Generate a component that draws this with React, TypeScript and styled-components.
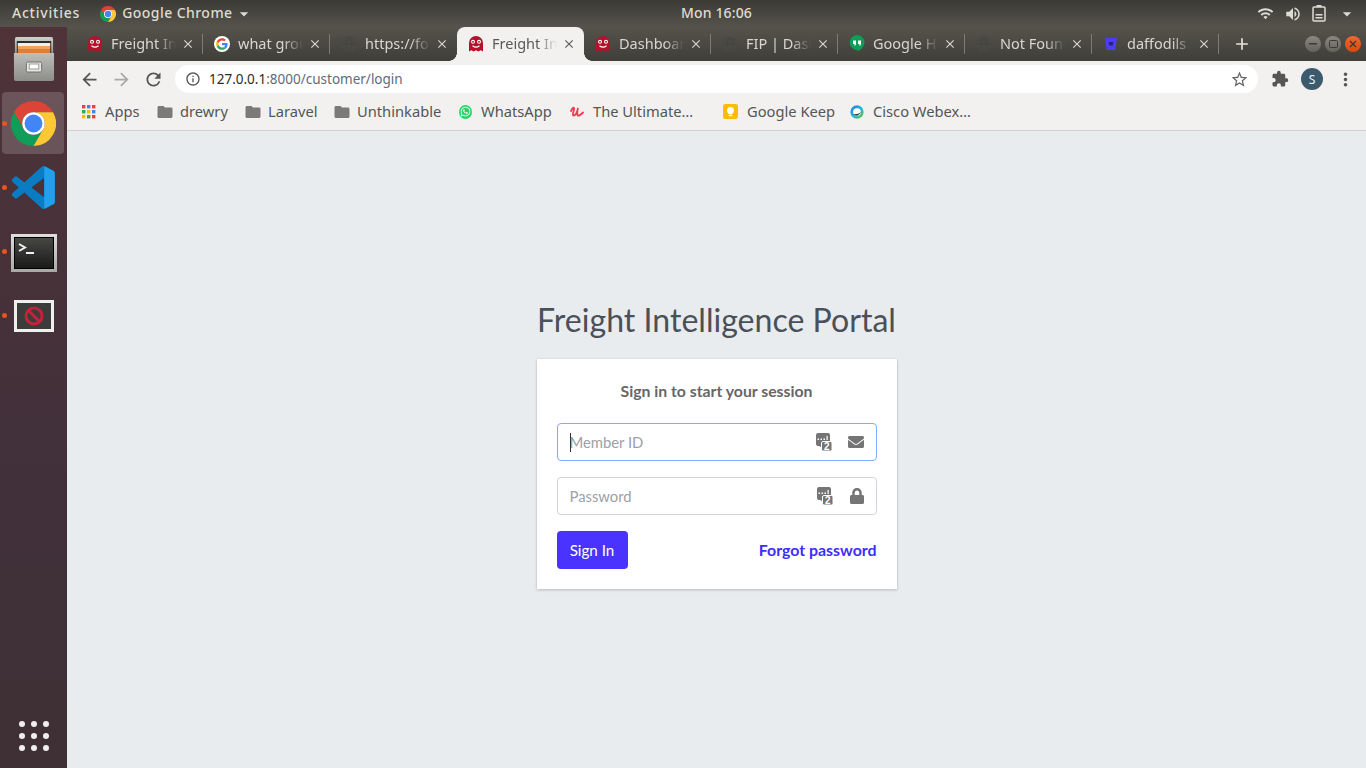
import React from "react";
import styled, { createGlobalStyle } from "styled-components";
import { FaEnvelope, FaLock, FaWhatsapp } from "react-icons/fa";
import {
  MdArrowBack, MdArrowForward, MdRefresh, MdInfoOutline, MdStarBorder, MdExtension, MdMoreVert,
  MdFolder, MdClose, MdAdd, MdWifi, MdVolumeUp, MdArrowDropDown,
} from "react-icons/md";

const PAGE_FONT = `"Lato", "Noto Sans", sans-serif`;
const UI_FONT = `"Noto Sans", "Open Sans", sans-serif`;

const Global = createGlobalStyle`
  html, body { margin: 0; padding: 0; height: 768px; overflow: hidden; background: #e9ecef; }
  #root { height: 768px; }
  * { box-sizing: border-box; }
`;

const Screen = styled.div`
  display: grid;
  grid-template-rows: 27px 1fr;
  grid-template-columns: 67px 1fr;
  width: 1366px;
  height: 768px;
  font-family: ${UI_FONT};
`;

const TopBar = styled.header`
  grid-column: 1 / 3;
  display: flex;
  align-items: center;
  padding: 0 9px 0 12px;
  background: linear-gradient(#3b3a36, #55534b);
  color: #dfdbd2;
  font-size: 14px;
  font-weight: 500;
  letter-spacing: 0.45px;
  line-height: 24px;
`;
const Activities = styled.span`
  letter-spacing: 0.78px;
  margin-bottom: 2px;
`;
const TopApp = styled.div`
  display: flex;
  align-items: center;
  gap: 6px;
  margin-left: 20px;
`;
const TopAppName = styled.span`
  margin-bottom: 2px;
`;
const TopCaret = styled(MdArrowDropDown)`
  margin-left: -5px;
`;
const Clock = styled.div`
  position: absolute;
  left: 681px;
  top: 1px;
  letter-spacing: 0.15px;
`;
const TopTray = styled.div`
  margin-left: auto;
  display: flex;
  align-items: center;
  gap: 10px;
  color: #dedbd3;
`;
const TrayCaret = styled(MdArrowDropDown)`
  margin-left: 1px;
`;

const Dock = styled.nav`
  display: flex;
  flex-direction: column;
  background: linear-gradient(#4f3339, #41303a 60%, #3f3035);
  padding-bottom: 17px;
`;
const DockItem = styled.div<{ $active?: boolean; $nudge?: number }>`
  position: relative;
  height: 64px;
  display: flex;
  align-items: center;
  justify-content: center;
  &::before {
    content: "";
    position: absolute;
    inset: 1px 3px 1px 2px;
    border-radius: 4px;
    background: ${(p) => (p.$active ? "rgba(255,255,255,0.17)" : "transparent")};
  }
  & > svg { position: relative; margin-top: ${(p) => p.$nudge ?? 0}px; }
`;
const RunDot = styled.span`
  position: absolute;
  left: 2px;
  top: 50%;
  width: 5px;
  height: 5px;
  margin-top: -2px;
  border-radius: 50%;
  background: #e95420;
`;
const AppGrid = styled.div`
  margin-top: auto;
  align-self: center;
  display: grid;
  grid-template-columns: repeat(3, 6px);
  gap: 6px;
`;
const AppDot = styled.span`
  width: 6px;
  height: 6px;
  border-radius: 50%;
  background: #f1efee;
`;

const Browser = styled.div`
  display: flex;
  flex-direction: column;
  min-width: 0;
`;
const TabStrip = styled.div`
  height: 34px;
  display: flex;
  align-items: stretch;
  padding-left: 9px;
  background: linear-gradient(#55534b, #3f3e39);
`;
const Tab = styled.div<{ $active?: boolean; $sep?: boolean }>`
  position: relative;
  width: 127px;
  flex: none;
  display: flex;
  align-items: center;
  gap: 8px;
  padding: 0 11px;
  color: ${(p) => (p.$active ? "#5a5a5a" : "#d8d6cf")};
  background: ${(p) => (p.$active ? "#f2f1f0" : "transparent")};
  border-radius: 8px 8px 0 0;
  font-size: 14.5px;
  &::after {
    content: "";
    position: absolute;
    right: 0;
    top: 7px;
    bottom: 7px;
    width: 1px;
    background: ${(p) => (p.$sep ? "#7d7b72" : "transparent")};
  }
`;
const Flare = styled.span<{ $side: "left" | "right" }>`
  position: absolute;
  bottom: 0;
  width: 8px;
  height: 8px;
  ${(p) => (p.$side === "left" ? "left: -8px;" : "right: -8px;")}
  background: radial-gradient(circle at ${(p) => (p.$side === "left" ? "0 0" : "100% 0")}, transparent 7.5px, #f2f1f0 8px);
`;
const TabTitle = styled.span`
  flex: 1;
  min-width: 0;
  padding-bottom: 2px;
  white-space: nowrap;
  overflow: hidden;
  -webkit-mask-image: linear-gradient(90deg, #000 70%, transparent);
  mask-image: linear-gradient(90deg, #000 70%, transparent);
`;
const TabClose = styled.span`
  display: flex;
  margin-right: -3px;
  margin-left: -3px;
  font-size: 14px;
`;
const NewTab = styled.div`
  width: 46px;
  display: flex;
  align-items: center;
  justify-content: center;
  color: #e6e3dc;
  font-size: 20px;
`;
const WinButtons = styled.div`
  margin-left: auto;
  padding-right: 5px;
  display: flex;
  align-items: center;
  gap: 4px;
`;
const WinButton = styled.span<{ $close?: boolean }>`
  width: 16px;
  height: 16px;
  border-radius: 50%;
  display: flex;
  align-items: center;
  justify-content: center;
  background: ${(p) => (p.$close ? "linear-gradient(#f0682f, #d9480f)" : "linear-gradient(#8a8880, #63625b)")};
  color: #3a3934;
`;

const Toolbar = styled.div`
  height: 35px;
  padding-top: 4px;
  display: flex;
  align-items: flex-start;
  background: #f2f1f0;
  color: #555;
`;
const ToolButton = styled.span<{ $dim?: boolean; $w?: number }>`
  width: ${(p) => p.$w ?? 32}px;
  height: 28px;
  flex: none;
  display: flex;
  align-items: center;
  justify-content: center;
  font-size: 21px;
  color: ${(p) => (p.$dim ? "#a9a9a9" : "#555")};
`;
const ToolLead = styled.span`
  width: 6px;
  flex: none;
`;
const Omnibox = styled.div`
  width: 1083px;
  height: 28px;
  margin-left: 6px;
  margin-right: 6px;
  flex: none;
  border-radius: 14px;
  background: #fff;
  display: flex;
  align-items: center;
  padding: 0 9px 0 10px;
  font-size: 13.5px;
  color: #5f6b7d;
`;
const InfoIcon = styled.span`
  display: flex;
  color: #555;
  font-size: 16px;
  margin-right: 8px;
`;
const UrlText = styled.span`
  padding-bottom: 1px;
`;
const Host = styled.span`
  color: #2c2c2c;
`;
const StarIcon = styled.span`
  display: flex;
  margin-left: auto;
  color: #666;
  font-size: 19px;
`;
const Avatar = styled.span`
  width: 22px;
  height: 22px;
  border-radius: 50%;
  background: #3d5a6c;
  color: #f2f2f2;
  font-size: 12px;
  display: flex;
  align-items: center;
  justify-content: center;
`;

const Bookmarks = styled.div`
  height: 35px;
  padding: 0 0 3px 15px;
  display: flex;
  align-items: center;
  background: #f2f1f0;
  border-bottom: 1px solid #cfd0d0;
  color: #555;
  font-size: 14.7px;
`;
const Bookmark = styled.div<{ $w: number }>`
  width: ${(p) => p.$w}px;
  flex: none;
  display: flex;
  align-items: center;
  gap: 9px;
  white-space: nowrap;
`;
const BookmarkLabel = styled.span`
  padding-bottom: 2px;
`;
const FolderIcon = styled(MdFolder)`
  color: #7a7a7a;
  font-size: 18px;
  margin: 0 -3px 0 -1px;
`;

const Page = styled.main`
  flex: 1;
  display: flex;
  flex-direction: column;
  align-items: center;
  justify-content: center;
  padding-bottom: 10px;
  background: #e9ecef;
  font-family: ${PAGE_FONT};
`;
const Title = styled.h1`
  margin: 0 0 20px;
  font-size: 32.1px;
  line-height: 39px;
  font-weight: 400;
  color: #495057;
  white-space: nowrap;
`;
const Card = styled.section`
  width: 360px;
  padding: 20px;
  background: #fff;
  box-shadow: 0 0 1px rgba(0, 0, 0, 0.125), 0 1px 3px rgba(0, 0, 0, 0.2);
  display: flex;
  flex-direction: column;
  gap: 16px;
`;
const CardHeading = styled.p`
  margin: 0 0 4px;
  text-align: center;
  font-size: 15.8px;
  line-height: 24px;
  font-weight: 700;
  color: #666;
`;
const Field = styled.div<{ $focused?: boolean }>`
  position: relative;
  height: 38px;
  display: flex;
  align-items: center;
  padding: 0 12px;
  border: 1px solid ${(p) => (p.$focused ? "#80a9ff" : "#ced4da")};
  border-radius: 4px;
  color: #757575;
`;
const FieldInput = styled.input`
  flex: 1;
  min-width: 0;
  border: 0;
  outline: 0;
  padding: 0;
  background: transparent;
  font: 400 14.8px ${PAGE_FONT};
  caret-color: transparent;
  &::placeholder { color: #9aa1a8; opacity: 1; }
`;
const Caret = styled.span`
  position: absolute;
  left: 12px;
  top: 9px;
  width: 1px;
  height: 19px;
  background: #333;
`;
const FieldIcons = styled.div<{ $gap: number }>`
  display: flex;
  align-items: center;
  gap: ${(p) => p.$gap}px;
`;
const LockGlyph = styled(FaLock)`
  margin-right: -1px;
`;
const Actions = styled.div`
  display: flex;
  align-items: center;
  justify-content: space-between;
`;
const SignIn = styled.button`
  width: 71px;
  height: 38px;
  border: 0;
  border-radius: 4px;
  background: #4b33ff;
  color: #fff;
  font: 400 15.2px ${PAGE_FONT};
  padding: 0;
`;
const Forgot = styled.a`
  color: #3d2dff;
  font-size: 15.9px;
  font-weight: 700;
  padding-bottom: 2px;
`;

const KeyIcon = () => (
  <svg width="16" height="18" viewBox="0 0 16 18">
    <rect x="0" y="0" width="14" height="13" rx="2" fill="#757575" />
    <path d="M1 12h6v3z" fill="#757575" />
    <rect x="1.5" y="5.5" width="1.5" height="1.500" fill="#fff" />
    <rect x="4.5" y="5.5" width="1.5" height="1.500" fill="#fff" />
    <rect x="7.5" y="5.5" width="1.5" height="1.500" fill="#fff" />
    <rect x="10.5" y="3" width="1.2" height="4" fill="#fff" />
    <rect x="5.5" y="8.5" width="10.500" height="9.500" rx="1.500" fill="#757575" stroke="#fff" strokeWidth="1" />
    <text x="10.800" y="17" fontSize="10" fontWeight="700" fontFamily="Liberation Sans, sans-serif" fill="#fff" textAnchor="middle">2</text>
  </svg>
);

const ChromeLogo = ({ size }: { size: number }) => (
  <svg width={size} height={size} viewBox="0 0 48 48">
    <path d="M44.8 12H24a12 12 0 0 0-10.4 18L3.200 12A24 24 0 0 1 44.800 12z" fill="#db4437" />
    <path d="M3.200 12l10.400 18a12 12 0 0 0 20.800 0L24 48A24 24 0 0 1 3.200 12z" fill="#0f9d58" />
    <path d="M24 48l10.400-18A12 12 0 0 0 24 12h20.800A24 24 0 0 1 24 48z" fill="#fcc934" />
    <circle cx="24" cy="24" r="12" fill="#fff" />
    <circle cx="24" cy="24" r="9.500" fill="#4285f4" />
  </svg>
);

const GhostIcon = () => (
  <svg width="16" height="16" viewBox="0 0 16 16">
    <path d="M1 7a7 7 0 0 1 14 0v8.500l-2.300-1.300-2.400 1.300L8 14.200l-2.300 1.300-2.400-1.300L1 15.500z" fill="#b3122b" />
    <circle cx="5" cy="5.800" r="2" fill="#fff" />
    <circle cx="11" cy="5.800" r="2" fill="#fff" />
    <circle cx="5" cy="5.800" r="0.900" fill="#7a0a1c" />
    <circle cx="11" cy="5.800" r="0.900" fill="#7a0a1c" />
    <path d="M4.500 9.700q3.500 2.800 7 0" fill="none" stroke="#fff" strokeWidth="1.100" />
  </svg>
);
const GoogleIcon = () => (
  <svg width="16" height="16" viewBox="0 0 48 48">
    <circle cx="24" cy="24" r="24" fill="#fff" />
    <g transform="translate(6.500 6.500) scale(0.73)">
      <path fill="#EA4335" d="M24 9.500c3.540 0 6.710 1.220 9.210 3.600l6.850-6.850C35.900 2.380 30.470 0 24 0 14.620 0 6.510 5.380 2.560 13.220l7.980 6.190C12.430 13.720 17.740 9.500 24 9.500z" />
      <path fill="#4285F4" d="M46.980 24.550c0-1.570-.15-3.090-.38-4.550H24v9.020h12.940c-.58 2.960-2.260 5.480-4.780 7.180l7.730 6c4.510-4.180 7.090-10.360 7.090-17.650z" />
      <path fill="#FBBC05" d="M10.530 28.590c-.48-1.450-.76-2.990-.76-4.590s.27-3.140.76-4.590l-7.980-6.190C.92 16.460 0 20.120 0 24c0 3.880.92 7.540 2.560 10.780l7.970-6.190z" />
      <path fill="#34A853" d="M24 48c6.480 0 11.930-2.130 15.890-5.810l-7.730-6c-2.150 1.450-4.920 2.300-8.160 2.300-6.260 0-11.570-4.220-13.470-9.910l-7.980 6.190C6.510 42.620 14.620 48 24 48z" />
    </g>
  </svg>
);
const GlobeDim = () => (
  <svg width="16" height="16" viewBox="0 0 16 16">
    <circle cx="8" cy="8" r="7.500" fill="#4a4943" />
    <path d="M1 8h14M8 1c-4 4-4 10 0 14M8 1c4 4 4 10 0 14" fill="none" stroke="#45443f" strokeWidth="1" />
  </svg>
);
const HangoutsIcon = () => (
  <svg width="16" height="18" viewBox="0 0 16 18">
    <path d="M8 0a7.500 7.500 0 0 1 7.500 7.500c0 4-3.600 7.200-7 9V15A7.500 7.500 0 0 1 8 0z" fill="#0f9d58" />
    <path d="M4 5.500h3V9q0 1.400-1.600 1.800V9H4zM9 5.500h3V9q0 1.400-1.600 1.800V9H9z" fill="#fff" />
  </svg>
);
const BitbucketIcon = () => (
  <svg width="16" height="16" viewBox="0 0 16 16">
    <path d="M2 2h12l-1.600 12H3.600z" fill="#4a3df2" />
    <path d="M5.600 6h4.800l-.8 3.600H6.400z" fill="#26227a" />
  </svg>
);
const AppsIcon = () => {
  const c = ["#ea4335", "#4285f4", "#ea4335", "#34a853", "#fbbc05", "#4285f4", "#fbbc05", "#34a853", "#ea4335"];
  return (
    <svg width="14" height="14" viewBox="0 0 14 14">
      {c.map((f, i) => (
        <rect key={i} x={(i % 3) * 5} y={Math.floor(i / 3) * 5} width="3.400" height="3.400" fill={f} />
      ))}
    </svg>
  );
};
const WhatsAppBubble = styled.span`
  width: 13px;
  height: 14px;
  border-radius: 50%;
  background: #25d366;
  color: #fff;
  display: flex;
  align-items: center;
  justify-content: center;
  font-size: 11px;
  flex: none;
`;
const UltimateIcon = () => (
  <svg width="14" height="14" viewBox="0 0 14 14">
    <path d="M1 6q2-4 3-3 .5 1-1 5-.5 3 1.200 2.500Q7 9 8 3 6.700 8 7.700 10.500 9 11.500 13 7.500" fill="none" stroke="#ee3b4f" strokeWidth="1.800" strokeLinecap="round" />
  </svg>
);
const KeepIcon = () => (
  <svg width="15" height="15" viewBox="0 0 16 16">
    <rect width="16" height="16" rx="2.500" fill="#fbbc04" />
    <circle cx="8" cy="6.800" r="3.600" fill="#fff" />
    <rect x="6" y="9" width="4" height="2" fill="#fff" />
    <rect x="6" y="11.700" width="4" height="1.300" fill="#fff" />
  </svg>
);
const WebexIcon = () => (
  <svg width="14" height="14" viewBox="0 0 16 16">
    <defs>
      <linearGradient id="wx" x1="0" y1="0" x2="1" y2="1">
        <stop offset="0" stopColor="#1e88e5" />
        <stop offset="0.550" stopColor="#27b8d8" />
        <stop offset="1" stopColor="#63c342" />
      </linearGradient>
    </defs>
    <circle cx="8" cy="8" r="6" fill="#fff" stroke="url(#wx)" strokeWidth="3.200" />
    <path d="M3.500 10.500a5.500 5.500 0 0 0 9-3q-2 4-9 3z" fill="#14323c" />
  </svg>
);

const FilesIcon = () => (
  <svg width="42" height="44" viewBox="0 0 44 44" preserveAspectRatio="none">
    <defs>
      <linearGradient id="cab" x1="0" y1="0" x2="0" y2="1">
        <stop offset="0" stopColor="#bdbdb9" />
        <stop offset="1" stopColor="#8d8d89" />
      </linearGradient>
      <linearGradient id="cabTop" x1="0" y1="0" x2="0" y2="1">
        <stop offset="0" stopColor="#d0d0cc" />
        <stop offset="1" stopColor="#8f8f8b" />
      </linearGradient>
    </defs>
    <path d="M2 2a2 2 0 0 1 2-2h36a2 2 0 0 1 2 2v15H2z" fill="url(#cabTop)" />
    <rect x="4" y="4" width="36" height="12" fill="#2f2d2a" />
    <rect x="5" y="6" width="34" height="3" fill="#f4efe4" />
    <rect x="5" y="9" width="34" height="3" fill="#f0a35c" />
    <rect x="5" y="12" width="34" height="4" fill="#dd7f36" />
    <path d="M1 16h42v26a2 2 0 0 1-2 2H3a2 2 0 0 1-2-2z" fill="url(#cab)" />
    <rect x="14" y="25" width="16" height="10" rx="1.500" fill="#e6e6e2" stroke="#6e6e6a" />
    <rect x="17" y="27" width="10" height="5" fill="#fff" stroke="#9a9a96" />
  </svg>
);
const VSCodeIcon = () => (
  <svg width="43" height="43" viewBox="0 0 100 100">
    <path d="M96 10.800 75.400.9a6.200 6.200 0 0 0-7.100 1.200L28.900 38.100 11.700 25a4.200 4.200 0 0 0-5.300.2L.9 30.300a4.200 4.200 0 0 0 0 6.200L15.800 50 .9 63.500a4.200 4.200 0 0 0 0 6.200l5.500 5a4.200 4.200 0 0 0 5.300.3l17.200-13.100 39.400 36a6.200 6.200 0 0 0 7.100 1.200L96 89.200a6.200 6.200 0 0 0 3.500-5.600V16.400a6.200 6.200 0 0 0-3.500-5.600zM75 72.700 45.100 50 75 27.300z" fill="#0a7cc4" />
    <path d="M75 0v27.300V72.700 100l21-10.800a6.200 6.200 0 0 0 3.500-5.600V16.400a6.200 6.200 0 0 0-3.500-5.600z" fill="#22a0ee" />
  </svg>
);
const TerminalIcon = () => (
  <svg width="46" height="38" viewBox="0 0 46 38">
    <defs>
      <linearGradient id="termFrame" x1="0" y1="0" x2="0" y2="1">
        <stop offset="0" stopColor="#dededa" />
        <stop offset="1" stopColor="#a8a8a4" />
      </linearGradient>
      <linearGradient id="termBody" x1="0" y1="0" x2="0" y2="1">
        <stop offset="0" stopColor="#484845" />
        <stop offset="1" stopColor="#191918" />
      </linearGradient>
    </defs>
    <rect x="0" y="0" width="46" height="38" fill="url(#termFrame)" />
    <rect x="3.500" y="3.500" width="39" height="31" fill="url(#termBody)" stroke="#000" />
    <path d="M8 10l6 3.500-6 3.500" fill="none" stroke="#f2f2f2" strokeWidth="2" />
    <rect x="15" y="18" width="8" height="2" fill="#f2f2f2" />
  </svg>
);
const BlockedIcon = () => (
  <svg width="40" height="32" viewBox="0 0 40 32">
    <rect x="0" y="0" width="40" height="32" fill="#efefef" />
    <rect x="3" y="3" width="34" height="26" fill="#3c3c3a" />
    <circle cx="20" cy="16" r="8" fill="none" stroke="#c4223c" strokeWidth="3" />
    <path d="M14.500 10.500l11 11" stroke="#c4223c" strokeWidth="3" />
  </svg>
);
const BatteryIcon = () => (
  <svg width="14" height="17" viewBox="0 0 14 17">
    <rect x="1" y="2" width="12" height="14" rx="1" fill="none" stroke="#dedbd3" strokeWidth="1.500" />
    <rect x="4.500" y="0" width="5" height="2" fill="#dedbd3" />
    <rect x="3.500" y="9" width="7" height="1.500" fill="#dedbd3" />
    <rect x="3.500" y="12" width="7" height="1.500" fill="#dedbd3" />
  </svg>
);

const tabs: { title: string; icon: React.ReactNode; active?: boolean; sep?: boolean }[] = [
  { title: "Freight Intelligence", icon: <GhostIcon />, sep: true },
  { title: "what group", icon: <GoogleIcon />, sep: true },
  { title: "https://fo", icon: <GlobeDim /> },
  { title: "Freight Intelligence", icon: <GhostIcon />, active: true },
  { title: "Dashboard", icon: <GhostIcon />, sep: true },
  { title: "FIP | Dashboard", icon: <GlobeDim />, sep: true },
  { title: "Google Hangouts", icon: <HangoutsIcon />, sep: true },
  { title: "Not Found", icon: <GlobeDim />, sep: true },
  { title: "daffodils", icon: <BitbucketIcon />, sep: true },
];

const folder = <FolderIcon />;
const bookmarks: { label: string; icon: React.ReactNode; w: number }[] = [
  { label: "Apps", icon: <AppsIcon />, w: 75 },
  { label: "drewry", icon: folder, w: 88 },
  { label: "Laravel", icon: folder, w: 89 },
  { label: "Unthinkable", icon: folder, w: 125 },
  { label: "WhatsApp", icon: <WhatsAppBubble><FaWhatsapp /></WhatsAppBubble>, w: 111 },
  { label: "The Ultimate…", icon: <UltimateIcon />, w: 153 },
  { label: "Google Keep", icon: <KeepIcon />, w: 127 },
  { label: "Cisco Webex…", icon: <WebexIcon />, w: 140 },
];

export default function App() {
  return (
    <Screen>
      <Global />
      <TopBar>
        <Activities>Activities</Activities>
        <TopApp>
          <ChromeLogo size={16} />
          <TopAppName>Google Chrome</TopAppName>
          <TopCaret size={20} />
        </TopApp>
        <Clock>Mon 16:06</Clock>
        <TopTray>
          <MdWifi size={17} />
          <MdVolumeUp size={18} />
          <BatteryIcon />
          <TrayCaret size={20} />
        </TopTray>
      </TopBar>
      <Dock>
        <DockItem><FilesIcon /></DockItem>
        <DockItem $active><RunDot /><ChromeLogo size={45} /></DockItem>
        <DockItem><RunDot /><VSCodeIcon /></DockItem>
        <DockItem $nudge={3}><RunDot /><TerminalIcon /></DockItem>
        <DockItem $nudge={1}><RunDot /><BlockedIcon /></DockItem>
        <AppGrid>
          {Array.from({ length: 9 }).map((_, i) => <AppDot key={i} />)}
        </AppGrid>
      </Dock>
      <Browser>
        <TabStrip>
          {tabs.map((t, i) => (
            <Tab key={i} $active={t.active} $sep={t.sep}>
              {t.active && <Flare $side="left" />}
              {t.active && <Flare $side="right" />}
              {t.icon}
              <TabTitle>{t.title}</TabTitle>
              <TabClose><MdClose /></TabClose>
            </Tab>
          ))}
          <NewTab><MdAdd /></NewTab>
          <WinButtons>
            <WinButton><svg width="8" height="2"><rect width="8" height="1.500" fill="#3a3934" /></svg></WinButton>
            <WinButton><svg width="9" height="8"><rect x="0.500" y="0.500" width="8" height="7" rx="1" fill="none" stroke="#3a3934" /></svg></WinButton>
            <WinButton $close><svg width="8" height="8"><path d="M1 1l6 6M7 1l-6 6" stroke="#3a3934" strokeWidth="1.300" /></svg></WinButton>
          </WinButtons>
        </TabStrip>
        <Toolbar>
          <ToolLead />
          <ToolButton><MdArrowBack /></ToolButton>
          <ToolButton $dim><MdArrowForward /></ToolButton>
          <ToolButton><MdRefresh /></ToolButton>
          <Omnibox>
            <InfoIcon><MdInfoOutline /></InfoIcon>
            <UrlText><Host>127.0.0.1</Host>:8000/customer/login</UrlText>
            <StarIcon><MdStarBorder /></StarIcon>
          </Omnibox>
          <ToolButton $w={32}><MdExtension size={18} /></ToolButton>
          <ToolButton $w={32}><Avatar>S</Avatar></ToolButton>
          <ToolButton $w={34}><MdMoreVert /></ToolButton>
        </Toolbar>
        <Bookmarks>
          {bookmarks.map((b) => (
            <Bookmark key={b.label} $w={b.w}>{b.icon}<BookmarkLabel>{b.label}</BookmarkLabel></Bookmark>
          ))}
        </Bookmarks>
        <Page>
          <Title>Freight Intelligence Portal</Title>
          <Card>
            <CardHeading>Sign in to start your session</CardHeading>
            <Field $focused>
              <Caret />
              <FieldInput placeholder="Member ID" readOnly />
              <FieldIcons $gap={16}>
                <KeyIcon />
                <FaEnvelope size={16} />
              </FieldIcons>
            </Field>
            <Field>
              <FieldInput placeholder="Password" type="password" readOnly />
              <FieldIcons $gap={16}>
                <KeyIcon />
                <LockGlyph size={16} />
              </FieldIcons>
            </Field>
            <Actions>
              <SignIn type="button">Sign In</SignIn>
              <Forgot>Forgot password</Forgot>
            </Actions>
          </Card>
        </Page>
      </Browser>
    </Screen>
  );
}
